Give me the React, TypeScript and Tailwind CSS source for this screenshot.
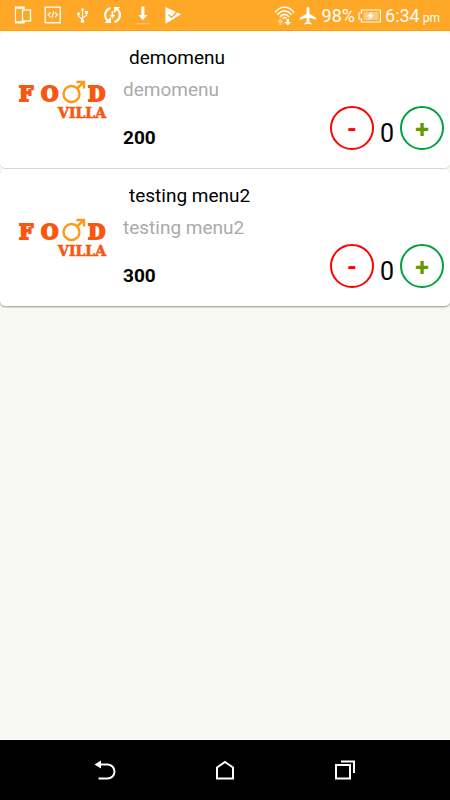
import * as React from "react";

const menus = [
  { id: 1, name: "demomenu", description: "demomenu", price: 200 },
  { id: 2, name: "testing menu2", description: "testing menu2", price: 300 },
];

function StatusIcons() {
  return (
    <svg width="168" height="20" viewBox="0 0 168 20" fill="none" stroke="#fff" aria-hidden="true">
      {/* devices */}
      <path d="M10 4V2.5H1.5v15H10V16" strokeWidth="1.2" />
      <path d="M1 2.6h9.5M1 17.4h9.5" strokeWidth="2.4" />
      <rect x="8.5" y="5" width="8" height="11" strokeWidth="1.3" />
      {/* code */}
      <rect x="31.2" y="2.2" width="15" height="15.5" strokeWidth="1.4" />
      <path d="m36.5 7.5-2.5 2.3 2.5 2.3m4.5-4.6 2.5 2.3-2.5 2.3M39.7 6.5l-1.8 6.5" strokeWidth="1.1" />
      {/* usb */}
      <path d="M68.5 16V5M64.5 9v2.5l4 2.5m0-1.2 4-2.3V8" strokeWidth="1.2" />
      <path d="m68.5 2.5 2 3h-4zM71 6h3v3h-3z" fill="#fff" stroke="none" />
      <circle cx="64.5" cy="8.8" r="1.5" fill="#fff" stroke="none" />
      <circle cx="68.5" cy="16" r="1.9" fill="#fff" stroke="none" />
      {/* sync */}
      <path d="M96.5 3a7.4 7.4 0 0 0-3 12.5M100.500 17a7.400 7.400 0 0 0 3-12.500" strokeWidth="2.3" />
      <path d="M90.5 18H97v-6zM106.5 2H100v6z" fill="#fff" stroke="none" />
      <path d="M97.6 6h1.8v4h2l-2.9 3.6-2.9-3.6h2z" fill="#fff" stroke="none" />
      {/* download */}
      <path d="M127.4 1.5h3v8.5h3.2l-4.7 5.2-4.7-5.2h3.2z" fill="#fff" stroke="none" />
      <path d="M122 18.8h14" strokeWidth="1" opacity=".4" />
      {/* play check */}
      <path d="M151.5 2 167 9.2l-3 2-12.500 7.500z" fill="#fff" stroke="none" />
      <path d="m154.500 9.500 3 3 7-7.500" stroke="#ffa726" strokeWidth="1.3" />
    </svg>
  );
}

function SignalIcons() {
  return (
    <svg width="44" height="22" viewBox="0 0 44 22" fill="none" stroke="#fff" aria-hidden="true">
      <path d="M1 7.500c5-7 14-7 19 0M3.500 9.800c4-5 10-5 14 0M6 12c2.700-3.500 6.300-3.500 9 0" strokeWidth="1.6" />
      <path d="M8.500 13.500c1.200-1.200 2.800-1.200 4 0" strokeWidth="1.4" />
      <path d="M6.3 13.5 3 17.2h2.2V20h2.2v-2.8h2.2z" fill="#fff" stroke="none" opacity=".5" />
      <path d="M12.6 14h2.4v3h2.2L13.8 20.5 10.4 17h2.2z" fill="#fff" stroke="none" />
      <path
        d="M34 2c.9 0 1.4.8 1.4 1.8v5l6.8 4v1.9l-6.8-2v4.1l2 1.5v1.3L34 18.700l-3.400.9v-1.300l2-1.500v-4.100l-6.800 2v-1.900l6.800-4v-5C32.600 2.800 33.100 2 34 2z"
        fill="#fff"
        stroke="none"
      />
    </svg>
  );
}

function BatteryIcon() {
  return (
    <svg width="23" height="14" viewBox="0 0 23 14" aria-hidden="true">
      <path d="M3.5 1h19v12h-19v-3H1V4h2.5z" fill="none" stroke="#fff" strokeWidth="1.2" />
      <path d="M5.5 3h15v8h-15z" fill="#fff" opacity=".4" />
      <path d="m14.5 2.5-6 5H12l-2 4 6.5-5.2H13z" fill="#fff" />
    </svg>
  );
}

function StatusBar() {
  return (
    <header className="flex h-[31px] items-center justify-between border-b border-[#ffa000] bg-[#ffa726] pl-[14px] pr-[10px] text-white">
      <StatusIcons />
      <div className="flex items-center pt-0.5">
        <SignalIcons />
        <span className="ml-1 text-lg">98%</span>
        <span className="ml-[3px]">
          <BatteryIcon />
        </span>
        <span className="ml-1 text-lg">
          6:34<span className="ml-[3px] text-xs">pm</span>
        </span>
      </div>
    </header>
  );
}

function Logo() {
  return (
    <svg
      width="92"
      height="46"
      viewBox="0 0 92 46"
      role="img"
      aria-label="Food Villa"
      className="font-['DejaVu_Serif',serif] font-bold"
    >
      <g fill="#f9560f" stroke="#f9560f" strokeWidth="1.8">
        <text x="3" y="26" fontSize="20">F</text>
        <text x="25" y="26" fontSize="20">O</text>
        <text x="72" y="26" fontSize="20">D</text>
        <text x="90" y="43" fontSize="14" textAnchor="end" strokeWidth=".6">VILLA</text>
      </g>
      <g fill="none" stroke="#fb9a17" strokeWidth="2.4">
        <circle cx="55.5" cy="19" r="8" />
        <path d="M61 13.500 68 7M60.500 7h7.500v6.500" />
      </g>
    </svg>
  );
}

function MenuCard({ menu }: any) {
  const [count, setCount] = React.useState(0);

  return (
    <li className="flex items-end rounded-[5px] bg-white pb-[18px] pl-4 pr-1.5 pt-[15px] shadow-[0_1px_1px_rgba(0,0,0,0.12)] last:shadow-[0_1px_2px_rgba(0,0,0,0.4)]">
      <div className="flex w-[107px] shrink-0 self-center">
        <Logo />
      </div>

      <div className="min-w-0 flex-1 text-[19px] leading-6">
        <h2 className="pl-1.5 text-black">{menu.name}</h2>
        <p className="mt-2 text-[#aaa]">{menu.description}</p>
        <p className="mt-6 font-bold text-black">{menu.price}</p>
      </div>

      <div className="flex items-end gap-1.5 text-[25px] leading-8">
        <button
          onClick={() => setCount(Math.max(0, count - 1))}
          aria-label={`Remove ${menu.name}`}
          className="size-11 rounded-full border-2 border-[#ff0000] pt-1 font-bold text-[#ff0000]"
        >
          -
        </button>
        <span className="min-w-[14px] text-center text-black">{count}</span>
        <button
          onClick={() => setCount(count + 1)}
          aria-label={`Add ${menu.name}`}
          className="size-11 rounded-full border-2 border-[#00a040] pt-1 font-bold text-[#669900]"
        >
          +
        </button>
      </div>
    </li>
  );
}

function NavBar() {
  return (
    <nav className="flex h-[61px] items-center justify-center gap-24 border-t border-white bg-black">
      <button aria-label="Back">
        <svg width="24" height="24" viewBox="0 0 24 24" fill="none" stroke="#fff" strokeWidth="2">
          <path d="M6 6.5h8.5a6.8 6.8 0 0 1 0 14H5.5" />
          <path d="M1.5 6.5 8 2.5v8z" fill="#fff" stroke="none" />
        </svg>
      </button>
      <button aria-label="Home">
        <svg width="24" height="24" viewBox="0 0 24 24" fill="none" stroke="#fff" strokeWidth="2">
          <path d="m12 4 8 5.5v11H4v-11z" />
        </svg>
      </button>
      <button aria-label="Recent apps">
        <svg width="24" height="24" viewBox="0 0 24 24" fill="none" stroke="#fff" strokeWidth="2">
          <path d="M3 7h14v13.5H3zM8 3.5h13V15" />
        </svg>
      </button>
    </nav>
  );
}

export default function App() {
  return (
    <div className="flex min-h-screen flex-col bg-[#f9f9f3] font-[Roboto,sans-serif]">
      <StatusBar />
      <main className="flex-1">
        <ul className="flex flex-col gap-px">
          {menus.map((menu) => (
            <MenuCard key={menu.id} menu={menu} />
          ))}
        </ul>
      </main>
      <NavBar />
    </div>
  );
}
